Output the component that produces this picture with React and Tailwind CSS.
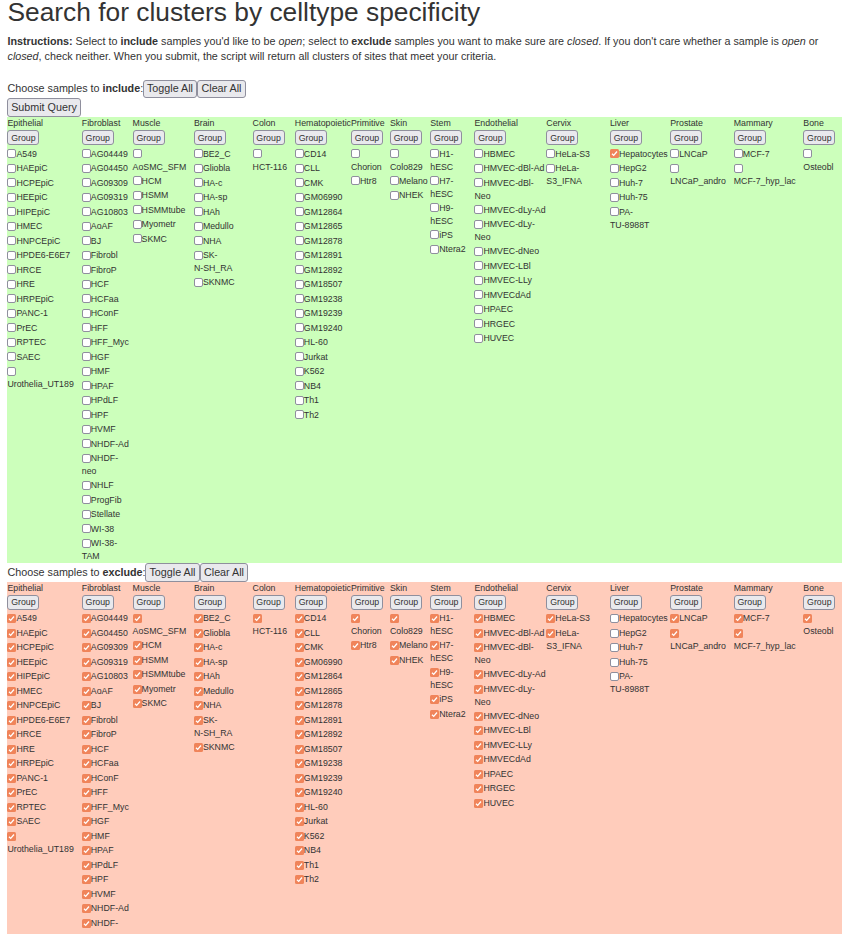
const GROUPS = [
  { name: "Epithelial", width: "w-[74.4px]", items: ["A549", "HAEpiC", "HCPEpiC", "HEEpiC", "HIPEpiC", "HMEC", "HNPCEpiC", "HPDE6-E6E7", "HRCE", "HRE", "HRPEpiC", "PANC-1", "PrEC", "RPTEC", "SAEC", "|Urothelia_UT189"] },
  { name: "Fibroblast", width: "w-[50.8px]", items: ["AG04449", "AG04450", "AG09309", "AG09319", "AG10803", "AoAF", "BJ", "Fibrobl", "FibroP", "HCF", "HCFaa", "HConF", "HFF", "HFF_Myc", "HGF", "HMF", "HPAF", "HPdLF", "HPF", "HVMF", "NHDF-Ad", "NHDF-|neo", "NHLF", "ProgFib", "Stellate", "WI-38", "WI-38-|TAM"] },
  { name: "Muscle", width: "w-[61.3px]", items: ["|AoSMC_SFM", "HCM", "HSMM", "HSMMtube", "Myometr", "SKMC"] },
  { name: "Brain", width: "w-[58.7px]", items: ["BE2_C", "Gliobla", "HA-c", "HA-sp", "HAh", "Medullo", "NHA", "SK-|N-SH_RA", "SKNMC"] },
  { name: "Colon", width: "w-[42.3px]", items: ["|HCT-116"] },
  { name: "Hematopoietic", width: "w-[56.1px]", items: ["CD14", "CLL", "CMK", "GM06990", "GM12864", "GM12865", "GM12878", "GM12891", "GM12892", "GM18507", "GM19238", "GM19239", "GM19240", "HL-60", "Jurkat", "K562", "NB4", "Th1", "Th2"] },
  { name: "Primitive", width: "w-[39px]", items: ["|Chorion", "Htr8"] },
  { name: "Skin", width: "w-[40.3px]", items: ["|Colo829", "Melano", "NHEK"] },
  { name: "Stem", width: "w-[44.2px]", items: ["H1-|hESC", "H7-|hESC", "H9-|hESC", "iPS", "Ntera2"] },
  { name: "Endothelial", width: "w-[71.9px]", items: ["HBMEC", "HMVEC-dBl-Ad", "HMVEC-dBl-|Neo", "HMVEC-dLy-Ad", "HMVEC-dLy-|Neo", "HMVEC-dNeo", "HMVEC-LBl", "HMVEC-LLy", "HMVECdAd", "HPAEC", "HRGEC", "HUVEC"] },
  { name: "Cervix", width: "w-[63.6px]", items: ["HeLa-S3", "HeLa-|S3_IFNA"] },
  { name: "Liver", width: "w-[60.3px]", items: ["Hepatocytes", "HepG2", "Huh-7", "Huh-75", "PA-|TU-8988T"] },
  { name: "Prostate", width: "w-[63.5px]", items: ["LNCaP", "|LNCaP_andro"] },
  { name: "Mammary", width: "w-[69.6px]", items: ["MCF-7", "|MCF-7_hyp_lac"] },
  { name: "Bone", width: "w-[38px]", items: ["|Osteobl"] },
];

function Box({ checked }) {
  if (checked) {
    return (
      <span className="flex size-[9px] shrink-0 items-center justify-center rounded-[1.5px] bg-[#f0845a]">
        <svg viewBox="0 0 9 9" className="size-[9px]" fill="none" stroke="white" strokeWidth="1.3">
          <path d="M2 4.7 3.7 6.4 7 2.5" />
        </svg>
      </span>
    );
  }
  return <span className="size-[9px] shrink-0 rounded-[2px] border border-[#8f8f9d] bg-white" />;
}

function Sample({ label, checked }) {
  const [first, rest] = label.split("|");
  return (
    <label className="block">
      <span className="flex h-[14.5px] items-center">
        <Box checked={checked} />
        <span className="pt-[0.4px]">{first}</span>
      </span>
      {rest && <span className="-mt-[0.5px] mb-[0.5px] block h-[12.5px]">{rest}</span>}
    </label>
  );
}

function SampleTable({ tone, headHeight, isChecked }) {
  return (
    <div className={`flex w-[835px] whitespace-nowrap pl-[0.4px] text-[8.79px] leading-[12.5px] ${tone}`}>
      {GROUPS.map((group) => (
        <div key={group.name} className={`shrink-0 ${group.width}`}>
          <div className={headHeight}>{group.name}</div>
          <button className="mb-[1.1px] flex h-[15.6px] w-[32px] items-center justify-center rounded-[3px] border border-[#8f8f9d] bg-[#e9e9ed] pt-[0.6px]">
            Group
          </button>
          {group.items.map((item) => (
            <Sample key={item} label={item} checked={isChecked(item)} />
          ))}
        </div>
      ))}
    </div>
  );
}

function Action({ className, children }) {
  return (
    <button className={`flex items-center justify-center whitespace-nowrap rounded-[3px] border border-[#8f8f9d] bg-[#e9e9ed] ${className}`}>
      {children}
    </button>
  );
}

export default function App() {
  return (
    <div className="h-[934px] w-[844px] overflow-hidden bg-white pl-[7px] font-['Liberation_Sans',Arial,sans-serif] text-[10.76px] leading-[15px] text-[#333]">
      <h1 className="h-[34px] whitespace-nowrap pl-[0.5px] text-[26.33px] leading-[24px]">Search for clusters by celltype specificity</h1>
      <p className="h-[46px] whitespace-nowrap pl-[0.5px]">
        <b>Instructions:</b> Select to <b>include</b> samples you'd like to be <i>open</i>; select to <b>exclude</b> samples you want to make sure are <i>closed</i>. If you don't care whether a sample is <i>open</i> or
        <br />
        <i>closed</i>, check neither. When you submit, the script will return all clusters of sites that meet your criteria.
      </p>
      <div className="flex h-[18px] items-start pl-[0.5px]">
        <span className="w-[135.5px] whitespace-nowrap pt-[1px]">Choose samples to <b>include</b>:</span>
        <Action className="h-[18px] w-[54px] pb-[1px]">Toggle All</Action>
        <Action className="h-[18px] w-[49px] pb-[1px]">Clear All</Action>
      </div>
      <div className="h-[19px]">
        <Action className="h-[19px] w-[74px]">Submit Query</Action>
      </div>
      <SampleTable tone="h-[446px] bg-[#ccffbb]" headHeight="h-[12.9px]" isChecked={(item) => item === "Hepatocytes"} />
      <div className="flex h-[19px] items-start pl-[0.5px]">
        <span className="w-[137.5px] whitespace-nowrap pt-[2px]">Choose samples to <b>exclude</b>:</span>
        <Action className="h-[19px] w-[55px]">Toggle All</Action>
        <Action className="h-[19px] w-[48px]">Clear All</Action>
      </div>
      <SampleTable
        tone="h-[352px] overflow-hidden bg-[#ffccbb]"
        headHeight="h-[12.6px]"
        isChecked={(item) => !["Hepatocytes", "HepG2", "Huh-7", "Huh-75", "PA-|TU-8988T"].includes(item)}
      />
    </div>
  );
}
